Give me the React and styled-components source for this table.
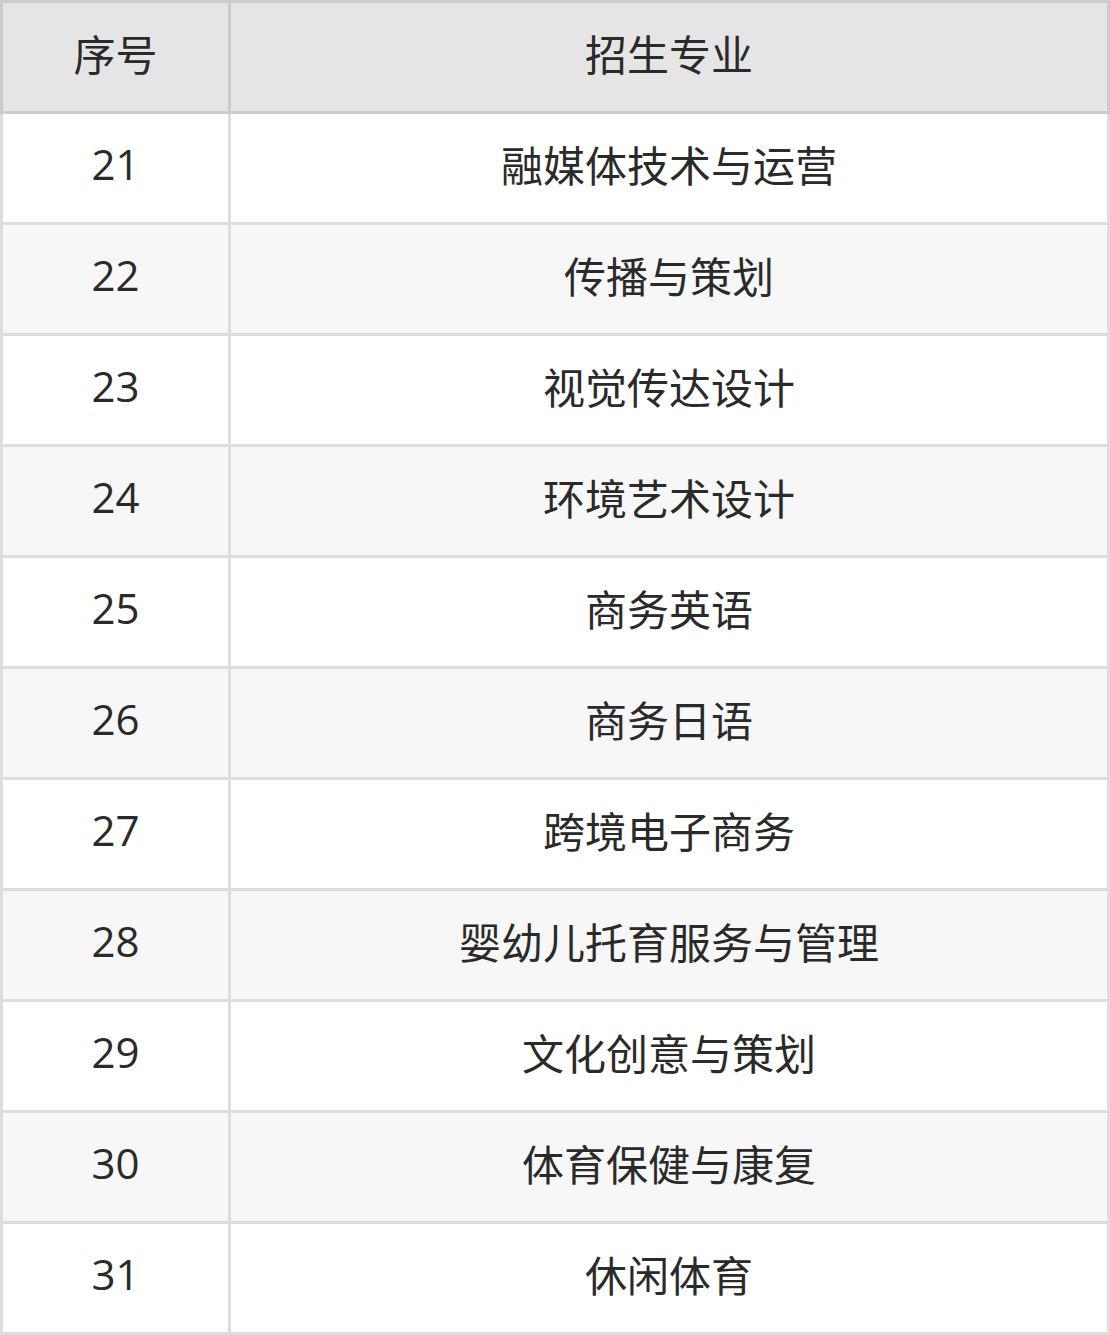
import React from "react";
import styled, { createGlobalStyle } from "styled-components";

const Global = createGlobalStyle`
  html, body { margin: 0; padding: 0; background: #fff; }
  body { font-family: "Open Sans", "Noto Sans CJK SC", sans-serif; }
`;

const Table = styled.div`
  width: 1110px;
  display: grid;
  grid-template-columns: 225px 876px;
  column-gap: 3px;
  row-gap: 3px;
  padding: 3px;
  box-sizing: border-box;
  background: #dddddd;
`;

const HeadBand = styled.div`
  display: contents;
`;

const Cell = styled.div`
  height: 108px;
  display: flex;
  align-items: center;
  justify-content: center;
  font-family: "Open Sans", "Noto Sans CJK SC", sans-serif;
  font-weight: 400;
  font-size: 42px;
  color: #2a2a2a;
  padding-bottom: 10px;
  box-sizing: border-box;
  background: ${(p) => (p.$head ? "#e5e5e5" : p.$alt ? "#f7f7f7" : "#ffffff")};
  box-shadow: ${(p) => (p.$head ? "0 0 0 3px #cccccc" : "none")};
  position: relative;
  z-index: ${(p) => (p.$head ? 1 : 0)};
`;

const rows = [
  ["21", "融媒体技术与运营"],
  ["22", "传播与策划"],
  ["23", "视觉传达设计"],
  ["24", "环境艺术设计"],
  ["25", "商务英语"],
  ["26", "商务日语"],
  ["27", "跨境电子商务"],
  ["28", "婴幼儿托育服务与管理"],
  ["29", "文化创意与策划"],
  ["30", "体育保健与康复"],
  ["31", "休闲体育"],
];

export default function App() {
  return (
    <>
      <Global />
      <Table>
        <HeadBand>
          <Cell $head>序号</Cell>
          <Cell $head>招生专业</Cell>
        </HeadBand>
        {rows.map(([n, name], i) => (
          <React.Fragment key={n}>
            <Cell $alt={i % 2 === 1}>{n}</Cell>
            <Cell $alt={i % 2 === 1}>{name}</Cell>
          </React.Fragment>
        ))}
      </Table>
    </>
  );
}
